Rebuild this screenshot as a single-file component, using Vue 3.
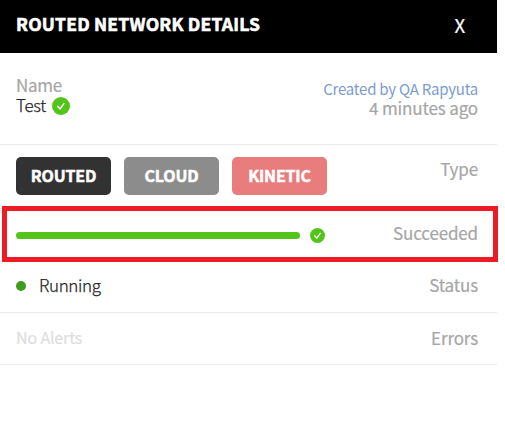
<script setup>
const types = [
  { label: 'ROUTED', tone: 'dark' },
  { label: 'CLOUD', tone: 'grey' },
  { label: 'KINETIC', tone: 'rose' }
]
const progress = 100
</script>

<template>
  <main class="panel">
    <header class="head">
      <h1 class="title">ROUTED NETWORK DETAILS</h1>
      <button class="close">X</button>
    </header>
    <section class="row info">
      <div>
        <div class="label name">Name</div>
        <div class="value">
          <span class="test">Test</span>
          <svg class="check" viewBox="0 0 18 18">
            <circle cx="9" cy="9" r="9" />
            <path d="M5.3 9 8.1 11.9 12.2 6.1" />
          </svg>
        </div>
      </div>
      <div class="meta">
        <div class="creator">Created by QA Rapyuta</div>
        <div class="label ago">4 minutes ago</div>
      </div>
    </section>
    <section class="row types">
      <div class="tags">
        <span v-for="t in types" :key="t.label" class="tag" :class="t.tone">{{ t.label }}</span>
      </div>
      <span class="label type">Type</span>
    </section>
    <section class="row line progress-row">
      <div class="progress">
        <div class="track"><div class="bar" :style="{ width: progress + '%' }"></div></div>
        <svg class="check small" viewBox="0 0 18 18">
          <circle cx="9" cy="9" r="9" />
          <path d="M5.2 9 8.2 12 12.8 5.8" />
        </svg>
      </div>
      <span class="label succeeded">Succeeded</span>
      <div class="highlight"></div>
    </section>
    <section class="row line">
      <div class="state"><i class="dot"></i><span class="running">Running</span></div>
      <span class="label status">Status</span>
    </section>
    <section class="row line">
      <span class="none">No Alerts</span>
      <span class="label errors">Errors</span>
    </section>
  </main>
</template>

<style>
body {
  margin: 0;
  background: #fff;
}
</style>

<style scoped>
.panel {
  width: 497px;
  font-family: "Noto Sans CJK SC", "Noto Sans", sans-serif;
  font-size: 17px;
  line-height: 20px;
  color: #262626;
  white-space: nowrap;
}
.head {
  display: flex;
  justify-content: space-between;
  box-sizing: border-box;
  height: 53px;
  padding: 14px 32px 0 16px;
  background: #000;
  color: #fff;
}
.title {
  margin: 0;
  font-size: 17.5px;
  font-weight: 700;
  line-height: 20px;
  letter-spacing: 0.2px;
  -webkit-text-stroke: 0.6px #fff;
}
.close {
  padding: 1px 0 0;
  border: 0;
  background: none;
  color: #fff;
  font: inherit;
  font-size: 18.5px;
  -webkit-text-stroke: 0.2px #fff;
  align-self: flex-start;
}
.row {
  display: flex;
  justify-content: space-between;
  box-sizing: border-box;
  padding: 0 19px 0 16px;
  border-bottom: 1px solid #ededed;
}
.label {
  color: #a6a6a6;
  font-size: 17px;
  letter-spacing: -0.15px;
  -webkit-text-stroke: 0.2px #a6a6a6;
}
.info {
  height: 92px;
  padding-top: 22px;
}
.name {
  letter-spacing: -0.3px;
}
.value {
  display: flex;
  align-items: center;
  gap: 6px;
  height: 21px;
}
.test,
.running {
  font-weight: 300;
  letter-spacing: -0.35px;
  padding-bottom: 2px;
  -webkit-text-stroke: 0.25px #262626;
}
.check {
  display: block;
  width: 18px;
  height: 18px;
}
.check circle {
  fill: #52c41a;
}
.check path {
  fill: none;
  stroke: #fff;
  stroke-width: 1.5;
}
.small {
  width: 15px;
  height: 15px;
}
.meta {
  display: flex;
  flex-direction: column;
  align-items: flex-end;
  padding-top: 4px;
}
.creator {
  font-size: 15px;
  line-height: 19px;
  letter-spacing: -0.23px;
  color: #7c9ccf;
}
.types {
  height: 64px;
  padding-top: 12px;
}
.tags {
  display: flex;
  gap: 13px;
}
.tag {
  width: 95px;
  height: 38px;
  border-radius: 5px;
  color: #fff;
  font-size: 16px;
  font-weight: 700;
  line-height: 37px;
  letter-spacing: -0.2px;
  text-align: center;
  -webkit-text-stroke: 0.5px #fff;
}
.dark { background: #323232; }
.grey { background: #8c8c8c; }
.rose { background: #e97c7c; }
.type {
  margin-top: 2px;
}
.line {
  height: 52px;
  align-items: center;
}
.progress-row {
  position: relative;
}
.progress {
  display: flex;
  align-items: center;
  gap: 10px;
  padding-top: 2px;
}
.succeeded,
.status {
  padding-bottom: 3px;
}
.track {
  width: 284px;
  height: 7px;
}
.bar {
  height: 100%;
  border-radius: 4px;
  background: #52c41a;
}
.highlight {
  position: absolute;
  top: -3px;
  left: 2px;
  box-sizing: border-box;
  width: 496px;
  height: 56px;
  border: 5px solid #ed1c24;
  z-index: 1;
}
.state {
  display: flex;
  align-items: center;
  gap: 13px;
  padding-bottom: 1px;
}
.dot {
  width: 10px;
  height: 10px;
  border-radius: 50%;
  background: #3f9c1c;
}
.none {
  padding-bottom: 3px;
  font-size: 16px;
  color: #dedede;
  letter-spacing: -0.15px;
  -webkit-text-stroke: 0.2px #dedede;
}
.errors {
  padding-bottom: 1px;
}
</style>
